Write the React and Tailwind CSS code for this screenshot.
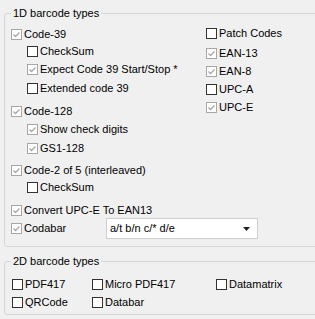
import React from 'react';

const font = { fontFamily: '"Liberation Sans", Arial, sans-serif' };

// Windows-style checkbox glyph
const Box = ({ checked }) => (
  <span
    className={`flex h-[11px] w-[11px] shrink-0 items-center justify-center border bg-white ${
      checked ? 'border-[#a6a6a6]' : 'border-[#333333]'
    }`}
  >
    {checked && (
      <svg width="9" height="9" viewBox="0 0 9 9">
        <path d="M1.5 4.5 L3.5 6.5 L7.5 2.5" stroke="#a6a6a6" strokeWidth="1.3" fill="none" />
      </svg>
    )}
  </span>
);

const Check = ({ label, checked, className = '' }) => (
  <div className={`flex h-[11px] items-center gap-[2px] whitespace-nowrap ${className}`}>
    <Box checked={checked} />
    <span className="leading-[13px]">{label}</span>
  </div>
);

const leftItems = [
  { label: 'Code-39', checked: true, mt: 'mt-0' },
  { label: 'CheckSum', checked: false, mt: 'mt-[6px]', sub: true },
  { label: 'Expect Code 39 Start/Stop *', checked: true, mt: 'mt-[7px]', sub: true },
  { label: 'Extended code 39', checked: false, mt: 'mt-[8px]', sub: true },
  { label: 'Code-128', checked: true, mt: 'mt-[12px]' },
  { label: 'Show check digits', checked: true, mt: 'mt-[7px]', sub: true },
  { label: 'GS1-128', checked: true, mt: 'mt-[8px]', sub: true },
  { label: 'Code-2 of 5 (interleaved)', checked: true, mt: 'mt-[11px]' },
  { label: 'CheckSum', checked: false, mt: 'mt-[6px]', sub: true },
  { label: 'Convert UPC-E To EAN13', checked: true, mt: 'mt-[12px]' },
];

const rightItems = [
  { label: 'Patch Codes', checked: false, mt: 'mt-0' },
  { label: 'EAN-13', checked: true, mt: 'mt-[9px]' },
  { label: 'EAN-8', checked: true, mt: 'mt-[7px]' },
  { label: 'UPC-A', checked: false, mt: 'mt-[7px]' },
  { label: 'UPC-E', checked: true, mt: 'mt-[7px]' },
];

export default function App() {
  return (
    <div className="h-[319px] w-[315px] overflow-hidden bg-[#f0f0f0] text-[11px] text-black" style={font}>
      <fieldset className="ml-[4px] mt-[8px] w-[330px] rounded-[3px] border border-[#d5d5d5]">
        <legend className="ml-[6px] px-[2px] leading-[11px]">1D barcode types</legend>
        <div className="flex pb-[12px] pl-[6px] pt-[9px]">
          <div className="mt-[1px] flex w-[195px] shrink-0 flex-col">
            {leftItems.map((it, i) => (
              <Check
                key={i}
                label={it.label}
                checked={it.checked}
                className={`${it.mt} ${it.sub ? 'pl-[16px]' : ''}`}
              />
            ))}
            <div className="mt-[7px] flex h-[11px] items-center">
              <Check label="Codabar" checked className="w-[95px] shrink-0" />
              <div className="flex h-[21px] w-[152px] shrink-0 items-center justify-between border border-[#cfcfcf] bg-white pl-[3px] pr-[7px]">
                <span className="leading-[13px]">a/t b/n c/* d/e</span>
                <svg width="7" height="4" viewBox="0 0 7 4">
                  <path d="M0 0 H7 L3.5 4 Z" fill="#222" />
                </svg>
              </div>
            </div>
          </div>
          <div className="flex flex-col">
            {rightItems.map((it, i) => (
              <Check key={i} label={it.label} checked={it.checked} className={it.mt} />
            ))}
          </div>
        </div>
      </fieldset>

      <fieldset className="ml-[4px] mt-[9px] w-[330px] rounded-[3px] border border-[#d5d5d5]">
        <legend className="ml-[6px] px-[2px] leading-[11px]">2D barcode types</legend>
        <div className="grid grid-cols-[80px_124px_auto] gap-y-[7px] pb-[6px] pl-[7px] pt-[12px]">
          <Check label="PDF417" />
          <Check label="Micro PDF417" />
          <Check label="Datamatrix" />
          <Check label="QRCode" />
          <Check label="Databar" />
        </div>
      </fieldset>
    </div>
  );
}
